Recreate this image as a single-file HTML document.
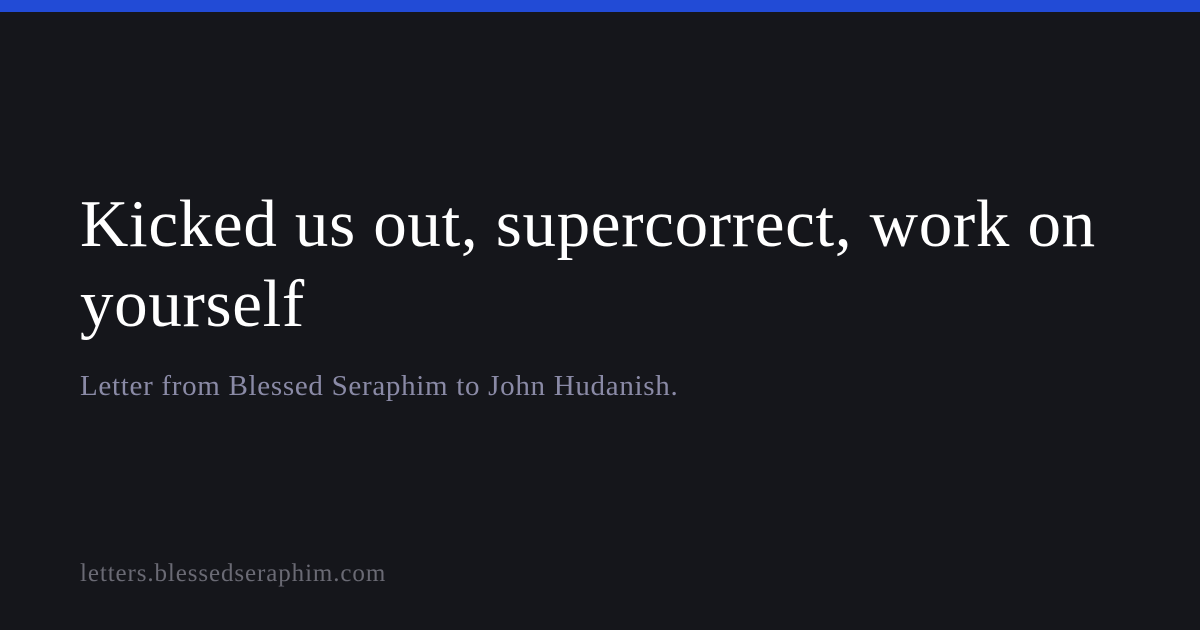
<!DOCTYPE html>
<html><head><meta charset="utf-8"><style>
html,body{margin:0;padding:0}
body{width:1200px;height:630px;background:#15161b;position:relative;overflow:hidden;font-family:"Liberation Serif",serif}
.bar{position:absolute;left:0;top:0;width:1200px;height:12px;background:#224bd6}
.t{position:absolute;left:80px;top:184px;color:#fff;font-size:67px;line-height:80px;letter-spacing:0.67px;width:1100px;white-space:nowrap}
.s{position:absolute;left:80px;top:368px;color:#8a8aa6;font-size:29px;line-height:36px;letter-spacing:0.7px;white-space:nowrap}
.f{position:absolute;left:80px;top:558px;color:#6a6a74;font-size:25px;line-height:32px;letter-spacing:0.9px;white-space:nowrap}
</style></head><body>
<div class="bar"></div>
<div class="t">Kicked us out, supercorrect, work on<br>yourself</div>
<div class="s">Letter from Blessed Seraphim to John Hudanish.</div>
<div class="f">letters.blessedseraphim.com</div>
</body></html>
